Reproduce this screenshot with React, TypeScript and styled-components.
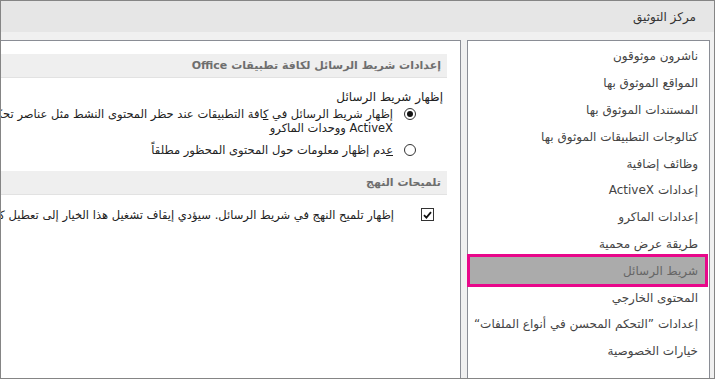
import React from "react";
import styled, { createGlobalStyle } from "styled-components";

const Global = createGlobalStyle`
  html, body { margin: 0; padding: 0; background: #f0f0f0; }
  body { font-family: "DejaVu Sans", "Noto Sans", sans-serif; }
  #root { width: 715px; height: 379px; }
`;

const Frame = styled.div`
  box-sizing: border-box;
  width: 715px;
  height: 379px;
  border: 1px solid #858585;
  direction: rtl;
  display: flex;
  flex-direction: column;
  background: #f0f0f0;
  overflow: hidden;
`;

const TitleBar = styled.div`
  height: 31px;
  flex: none;
  background: #e6e6e6;
  display: flex;
  align-items: center;
  padding-right: 18px;
  font-size: 12px;
  color: #333;
`;

const Body = styled.div`
  flex: 1;
  display: flex;
  padding: 8px 4px 0 0;
  gap: 6px;
  min-height: 0;
`;

const Nav = styled.div`
  box-sizing: border-box;
  width: 243px;
  flex: none;
  background: #fff;
  border: 1px solid #8a8d95;
  border-bottom: none;
  padding-top: 2px;
  display: flex;
  flex-direction: column;
`;

const NavItem = styled.div<{ $selected?: boolean }>`
  height: 26.8px;
  display: flex;
  align-items: center;
  padding-right: ${(p) => (p.$selected ? 7 : 11)}px;
  margin: ${(p) => (p.$selected ? "0 4px 0 2px" : "0")};
  font-size: 12px;
  color: ${(p) => (p.$selected ? "#666" : "#444")};
  background: ${(p) => (p.$selected ? "#ababab" : "transparent")};
  outline: ${(p) => (p.$selected ? "3px solid #e8078a" : "none")};
  white-space: nowrap;
`;

const Content = styled.div`
  flex: 1;
  min-width: 0;
  background: #fff;
  border-top: 1px solid #8a8d95;
  border-right: 1px solid #8a8d95;
  padding: 13px 13px 0 0;
  overflow: hidden;
  font-size: 11.5px;
  color: #222;
`;

const SectionHeader = styled.div<{ $top?: number }>`
  height: 24px;
  box-sizing: border-box;
  background: #efefef;
  border-bottom: 1px solid #e2e2e2;
  display: flex;
  align-items: center;
  padding-right: 6px;
  margin-top: ${(p) => p.$top ?? 0}px;
  font-weight: bold;
  font-size: 11px;
  color: #6e6e6e;
  white-space: nowrap;
`;

const GroupLabel = styled.div`
  margin-top: 11px;
  padding-right: 4px;
  height: 16px;
  line-height: 16px;
  font-size: 12px;
  white-space: nowrap;
`;

const OptionRow = styled.div<{ $indent: number; $top: number; $gap: number }>`
  display: flex;
  align-items: flex-start;
  gap: ${(p) => p.$gap}px;
  padding-right: ${(p) => p.$indent}px;
  margin-top: ${(p) => p.$top}px;
  white-space: nowrap;
  line-height: 14px;
`;

const Radio = styled.span<{ $on?: boolean }>`
  box-sizing: border-box;
  flex: none;
  width: 12px;
  height: 12px;
  margin-top: 1px;
  border-radius: 50%;
  border: 1px solid #333;
  background: #fff;
  display: flex;
  align-items: center;
  justify-content: center;
  &::after {
    content: "";
    width: 6px;
    height: 6px;
    border-radius: 50%;
    background: ${(p) => (p.$on ? "#111" : "transparent")};
  }
`;

const Check = styled.span`
  box-sizing: border-box;
  flex: none;
  width: 13px;
  height: 13px;
  border: 1px solid #333;
  background: #fff;
  display: flex;
  align-items: center;
  justify-content: center;
`;

const Label = styled.span`
  display: block;
`;

const navItems = [
  "ناشرون موثوقون",
  "المواقع الموثوق بها",
  "المستندات الموثوق بها",
  "كتالوجات التطبيقات الموثوق بها",
  "وظائف إضافية",
  "إعدادات ActiveX",
  "إعدادات الماكرو",
  "طريقة عرض محمية",
  "شريط الرسائل",
  "المحتوى الخارجي",
  "إعدادات ”التحكم المحسن في أنواع الملفات“",
  "خيارات الخصوصية",
];

export default function App() {
  return (
    <>
      <Global />
      <Frame>
        <TitleBar>مركز التوثيق</TitleBar>
        <Body>
          <Nav>
            {navItems.map((t, i) => (
              <NavItem key={i} $selected={i === 8}>
                {t}
              </NavItem>
            ))}
          </Nav>
          <Content>
            <SectionHeader>إعدادات شريط الرسائل لكافة تطبيقات Office</SectionHeader>
            <GroupLabel>إظهار شريط الرسائل</GroupLabel>
            <OptionRow $indent={31} $top={2} $gap={11}>
              <Radio $on />
              <Label>
                إظهار شريط الرسائل في <u>ك</u>افة التطبيقات عند حظر المحتوى النشط مثل عناصر تحكم
                <br />
                ActiveX ووحدات الماكرو
              </Label>
            </OptionRow>
            <OptionRow $indent={31} $top={8} $gap={11}>
              <Radio />
              <Label>
                <u>ع</u>دم إظهار معلومات حول المحتوى المحظور مطلقاً
              </Label>
            </OptionRow>
            <SectionHeader $top={14}>تلميحات النهج</SectionHeader>
            <OptionRow $indent={13} $top={13} $gap={27}>
              <Check>
                <svg width="9" height="8" viewBox="0 0 9 8">
                  <path d="M1 4.2 L3.4 6.6 L8 1.2" fill="none" stroke="#111" strokeWidth="1.8" />
                </svg>
              </Check>
              <Label>
                إظهار تلميح النهج في شريط الرسائل. سيؤدي إيقاف تشغيل هذا الخيار إلى تعطيل كافة تلميحات النهج.
              </Label>
            </OptionRow>
          </Content>
        </Body>
      </Frame>
    </>
  );
}
